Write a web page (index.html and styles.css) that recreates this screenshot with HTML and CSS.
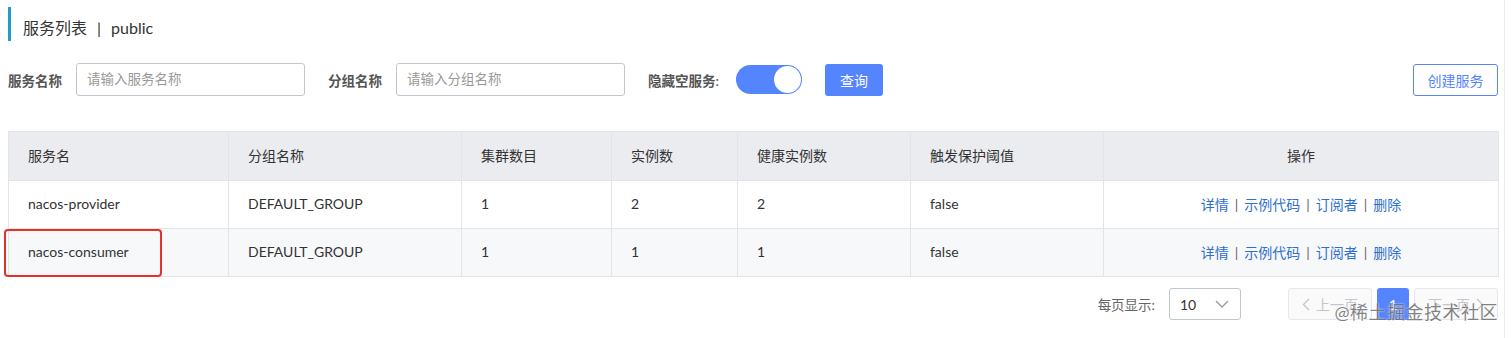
FILE: index.html
```html
<!DOCTYPE html>
<html lang="zh-CN">
<head>
<meta charset="utf-8">
<title>服务列表</title>
<link rel="stylesheet" href="styles.css">
</head>
<body>
<div class="page">
  <div class="title">服务列表<span class="sep">|</span>public</div>

  <div class="filters">
    <span class="label">服务名称</span>
    <div class="input">请输入服务名称</div>
    <span class="label gap">分组名称</span>
    <div class="input">请输入分组名称</div>
    <span class="label gap">隐藏空服务:</span>
    <div class="switch"><span class="knob"></span></div>
    <button class="btn primary">查询</button>
    <button class="btn outline">创建服务</button>
  </div>

  <table class="grid">
    <colgroup>
      <col class="c1"><col class="c2"><col class="c3"><col class="c4"><col class="c5"><col class="c6"><col class="c7">
    </colgroup>
    <thead>
      <tr><th>服务名</th><th>分组名称</th><th>集群数目</th><th>实例数</th><th>健康实例数</th><th>触发保护阈值</th><th class="center">操作</th></tr>
    </thead>
    <tbody>
      <tr>
        <td>nacos-provider</td><td>DEFAULT_GROUP</td><td>1</td><td>2</td><td>2</td><td>false</td>
        <td class="center ops"><a>详情</a><span class="bar">|</span><a>示例代码</a><span class="bar">|</span><a>订阅者</a><span class="bar">|</span><a>删除</a></td>
      </tr>
      <tr class="alt">
        <td class="marked"><span class="mark"></span>nacos-consumer</td><td>DEFAULT_GROUP</td><td>1</td><td>1</td><td>1</td><td>false</td>
        <td class="center ops"><a>详情</a><span class="bar">|</span><a>示例代码</a><span class="bar">|</span><a>订阅者</a><span class="bar">|</span><a>删除</a></td>
      </tr>
    </tbody>
  </table>

  <div class="pager">
    <span class="pg-label">每页显示:</span>
    <div class="select"><span>10</span>
      <svg width="14" height="8" viewBox="0 0 14 8"><path d="M1 1l6 6 6-6" fill="none" stroke="#999" stroke-width="1.3"/></svg>
    </div>
    <div class="pages">
      <button class="pbtn disabled"><svg width="8" height="13" viewBox="0 0 8 13"><path d="M7 1L1.5 6.5 7 12" fill="none" stroke="#c4c6cf" stroke-width="1.3"/></svg>上一页</button>
      <button class="pbtn current">1</button>
      <button class="pbtn disabled">下一页<svg width="8" height="13" viewBox="0 0 8 13"><path d="M1 1l5.5 5.5L1 12" fill="none" stroke="#c4c6cf" stroke-width="1.3"/></svg></button>
      <span class="watermark">@稀土掘金技术社区</span>
    </div>
  </div>
</div>
</body>
</html>
```
FILE: styles.css
```css
* { box-sizing: border-box; }
html, body { margin: 0; background: #fff; }
body {
  font-family: "Lato", "Noto Sans CJK SC", sans-serif;
  font-size: 14px;
  color: #333;
}
.page {
  width: 1505px;
  height: 338px;
  border-right: 1px solid #ececec;
  padding: 7px 6px 0 8px;
}
.title {
  height: 34px;
  line-height: 34px;
  padding-top: 7px;
  line-height: 27px;
  border-left: 3px solid #209bc8;
  padding-left: 12px;
  font-size: 16px;
  color: #333;
}
.title .sep { margin: 0 10px; }

.filters {
  margin-top: 22px;
  display: flex;
  align-items: center;
  height: 33px;
}
.label {
  font-weight: 600;
  color: #555;
  font-size: 13.5px;
  margin-right: 14px;
}
.label.gap { margin-left: 23px; }
.input {
  width: 229px;
  height: 33px;
  border: 1px solid #c4c6cf;
  border-radius: 3px;
  padding-left: 10px;
  line-height: 31px;
  color: #999;
  font-size: 13.5px;
}
.switch {
  width: 66px;
  height: 29px;
  border-radius: 15px;
  background: #5584ff;
  display: flex;
  justify-content: flex-end;
  align-items: center;
  padding-right: 1px;
  margin-left: 3px;
}
.knob {
  width: 27px;
  height: 27px;
  border-radius: 50%;
  background: #fff;
}
.btn {
  font-family: inherit;
  font-size: 14px;
  height: 32px;
  border-radius: 3px;
  cursor: pointer;
}
.btn.primary {
  margin-left: 23px;
  width: 58px;
  background: #5584ff;
  border: none;
  color: #fff;
}
.btn.outline {
  margin-left: auto;
  width: 85px;
  background: #fff;
  border: 1px solid #5584ff;
  color: #5584ff;
}

.grid {
  margin-top: 35px;
  width: 1490px;
  border-collapse: collapse;
  table-layout: fixed;
}
.c1 { width: 220px; } .c2 { width: 233px; } .c3 { width: 150px; } .c4 { width: 126px; }
.c5 { width: 173px; } .c6 { width: 193px; } .c7 { width: 395px; }
.grid th, .grid td {
  border: 1px solid #e3e4e8;
  padding: 0 0 2px 19px;
  text-align: left;
  font-weight: normal;
  white-space: nowrap;
}
.grid th {
  height: 49px;
  background: #ebecf0;
  color: #333;
}
.grid td { height: 48px; color: #333; }
.grid tr.alt td { background: #f7f8fa; }
.grid .center { text-align: center; padding: 0 0 2px 0; }
.ops a { color: #2f6fcf; }
.ops .bar { color: #666; margin: 0 6px; }
.marked { position: relative; }
.mark {
  position: absolute;
  left: -5px; top: 0; width: 158px; height: 48px;
  border: 2px solid #e8302b;
  border-radius: 4px;
}

.pager {
  margin-top: 11px;
  display: flex;
  justify-content: flex-end;
  align-items: center;
  height: 32px;
}
.pg-label { color: #666; font-size: 13.5px; margin-right: 14px; }
.select {
  width: 72px;
  height: 32px;
  border: 1px solid #c4c6cf;
  border-radius: 3px;
  display: flex;
  align-items: center;
  justify-content: space-between;
  padding: 0 11px 0 10px;
  color: #333;
}
.pages {
  margin-left: 47px;
  display: flex;
  gap: 5px;
  position: relative;
}
.pbtn {
  font-family: inherit;
  font-size: 14px;
  height: 32px;
  border-radius: 3px;
  display: flex;
  align-items: center;
  justify-content: center;
  gap: 6px;
}
.pbtn.disabled {
  width: 84px;
  background: #fafafa;
  border: 1px solid #e6e7eb;
  color: #c4c6cf;
}
.pbtn.current {
  width: 32px;
  background: #5584ff;
  border: none;
  color: #fff;
}
.watermark {
  position: absolute;
  right: 0;
  top: 13px;
  font-size: 18px;
  line-height: 22px;
  color: rgba(90, 90, 90, 0.75);
  text-shadow: 0 0 2px #fff;
  letter-spacing: 0.5px;
}
```
